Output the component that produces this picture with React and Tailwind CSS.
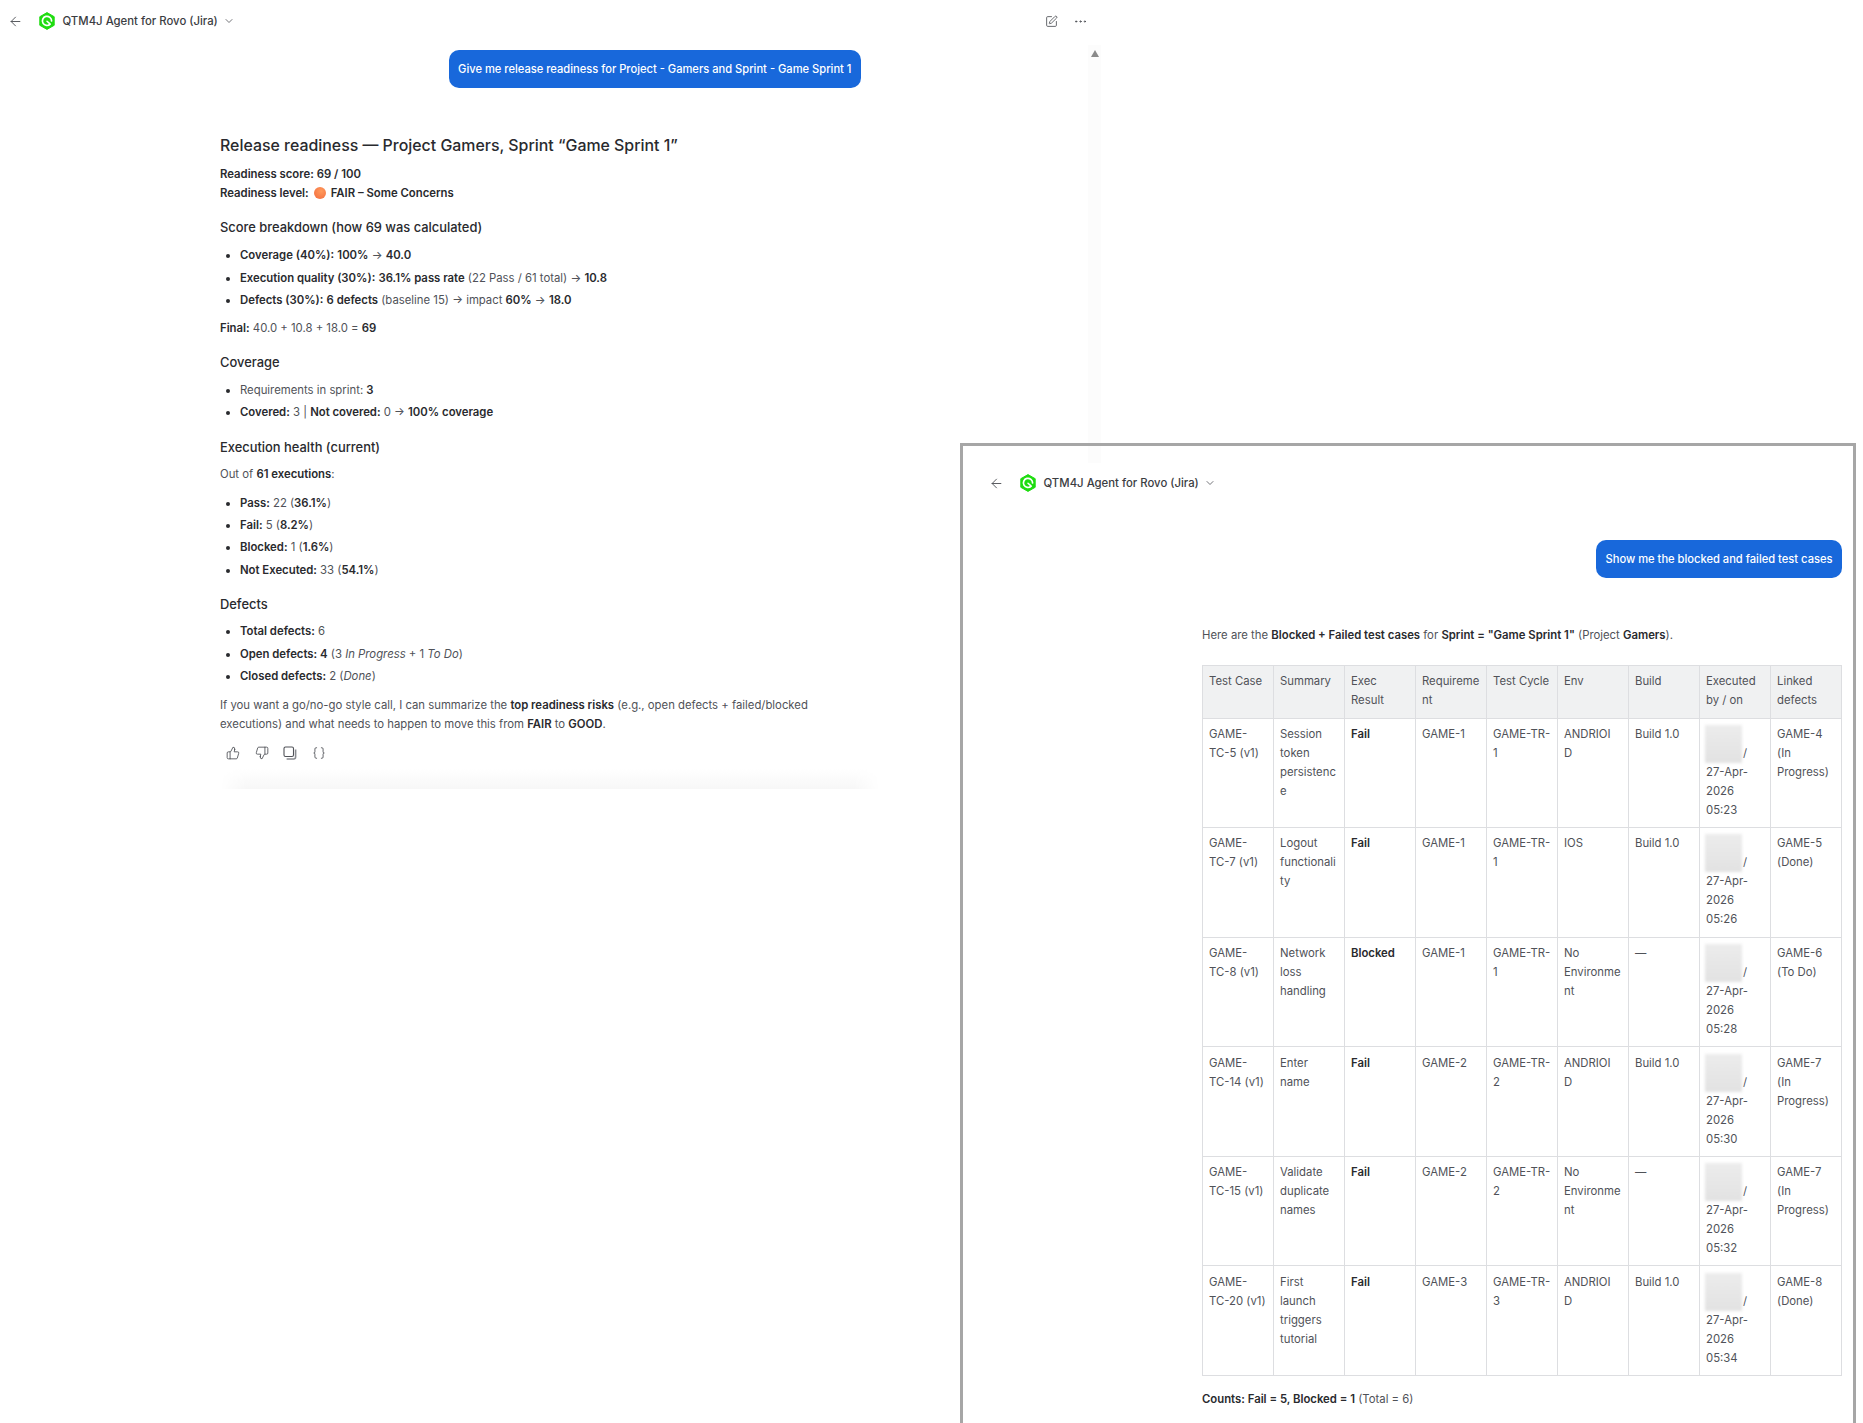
import { ArrowLeft, Braces, ChevronDown, Ellipsis, SquarePen, ThumbsDown, ThumbsUp } from 'lucide-react'

const rows = [
  { id: 'GAME-\nTC-5 (v1)', summary: 'Session token persistence', result: 'Fail', req: 'GAME-1', cycle: 'GAME-TR-1', env: 'ANDRIOI\nD', build: 'Build 1.0', time: '05:23', defects: 'GAME-4 (In Progress)' },
  { id: 'GAME-\nTC-7 (v1)', summary: 'Logout functionality', result: 'Fail', req: 'GAME-1', cycle: 'GAME-TR-1', env: 'IOS', build: 'Build 1.0', time: '05:26', defects: 'GAME-5 (Done)' },
  { id: 'GAME-\nTC-8 (v1)', summary: 'Network loss handling', result: 'Blocked', req: 'GAME-1', cycle: 'GAME-TR-1', env: 'No Environment', build: '—', time: '05:28', defects: 'GAME-6 (To Do)' },
  { id: 'GAME-\nTC-14 (v1)', summary: 'Enter name', result: 'Fail', req: 'GAME-2', cycle: 'GAME-TR-2', env: 'ANDRIOI\nD', build: 'Build 1.0', time: '05:30', defects: 'GAME-7 (In Progress)' },
  { id: 'GAME-\nTC-15 (v1)', summary: 'Validate duplicate names', result: 'Fail', req: 'GAME-2', cycle: 'GAME-TR-2', env: 'No Environment', build: '—', time: '05:32', defects: 'GAME-7 (In Progress)' },
  { id: 'GAME-\nTC-20 (v1)', summary: 'First launch triggers tutorial', result: 'Fail', req: 'GAME-3', cycle: 'GAME-TR-3', env: 'ANDRIOI\nD', build: 'Build 1.0', time: '05:34', defects: 'GAME-8 (Done)' },
]

const headers = ['Test Case', 'Summary', 'Exec Result', 'Requirement', 'Test Cycle', 'Env', 'Build', 'Executed by / on', 'Linked defects']

function Logo() {
  return (
    <svg width="16" height="18" viewBox="0 0 16 18" className="shrink-0">
      <path d="M8 .6 15.2 4.7v8.6L8 17.4.8 13.3V4.7z" fill="#1fdc10" stroke="#1fdc10" strokeWidth="1" strokeLinejoin="round" />
      <path d="M11.2 12.2A4.6 4.6 0 1 1 12.6 9" fill="none" stroke="#fff" strokeWidth="1.7" strokeLinecap="round" />
      <path d="M8 9.2 10.4 11.4" fill="none" stroke="#fff" strokeWidth="1.5" strokeLinecap="round" />
    </svg>
  )
}

function AgentName() {
  return (
    <>
      <Logo />
      <span className="ml-[7.5px] text-[11.35px] leading-[19px] font-medium text-[#3b3d42]">QTM4J Agent for Rovo (Jira)</span>
      <ChevronDown className="ml-[5px] h-[12px] w-[12px] text-[#505258]" strokeWidth={1.6} />
    </>
  )
}

function Bubble({ children }) {
  return (
    <div className="flex justify-end">
      <div className="flex h-[38px] items-center rounded-[10px] bg-[#1868db] px-[9.5px] text-[11.15px] font-medium text-white">
        {children}
      </div>
    </div>
  )
}

function Heading({ children, className }) {
  return <h3 className={`text-[12.9px] leading-[22px] font-medium text-[#292a2e] ${className}`}>{children}</h3>
}

function List({ children, className }) {
  return <ul className={`list-disc space-y-[3.4px] pl-[20px] marker:text-[#292a2e] ${className}`}>{children}</ul>
}

function B({ children }) {
  return <strong className="font-semibold text-[#292a2e]">{children}</strong>
}

function CopyIcon() {
  return (
    <svg width="14" height="14" viewBox="0 0 14 14" fill="none" stroke="#505258" strokeWidth="1.1">
      <rect x="1" y="1" width="9.5" height="9.5" rx="1.5" />
      <path d="M12.6 3.6v7.4a2 2 0 0 1-2 2H3.6" strokeWidth="1.6" stroke="#8a8c91" />
    </svg>
  )
}

function ReleaseReadiness() {
  return (
    <div className="w-[640px] text-[11.33px] leading-[19px] text-[#505258]">
      <h2 className="mt-[45px] text-[15.9px] leading-[26px] font-medium text-[#292a2e]">
        Release readiness — Project Gamers, Sprint “Game Sprint 1”
      </h2>
      <p className="mt-[5.5px]"><B>Readiness score: 69 / 100</B></p>
      <p className="flex items-center">
        <B>Readiness level:</B>
        <span className="mx-[5px] h-[12px] w-[12px] rounded-full bg-[radial-gradient(circle_at_60%_35%,#ff9a5c,#f2693c)]" />
        <B>FAIR – Some Concerns</B>
      </p>

      <Heading className="mt-[14.2px]">Score breakdown (how 69 was calculated)</Heading>
      <List className="mt-[7.5px]">
        <li><B>Coverage (40%):</B> <B>100%</B> → <B>40.0</B></li>
        <li><B>Execution quality (30%):</B> <B>36.1% pass rate</B> (22 Pass / 61 total) → <B>10.8</B></li>
        <li><B>Defects (30%):</B> <B>6 defects</B> (baseline 15) → impact <B>60%</B> → <B>18.0</B></li>
      </List>
      <p className="mt-[9px]"><B>Final:</B> 40.0 + 10.8 + 18.0 = <B>69</B></p>

      <Heading className="mt-[14px]">Coverage</Heading>
      <List className="mt-[7px]">
        <li>Requirements in sprint: <B>3</B></li>
        <li><B>Covered:</B> 3 | <B>Not covered:</B> 0 → <B>100% coverage</B></li>
      </List>

      <Heading className="mt-[14.2px]">Execution health (current)</Heading>
      <p className="mt-[6px]">Out of <B>61 executions</B>:</p>
      <List className="mt-[10px]">
        <li><B>Pass:</B> 22 (<B>36.1%</B>)</li>
        <li><B>Fail:</B> 5 (<B>8.2%</B>)</li>
        <li><B>Blocked:</B> 1 (<B>1.6%</B>)</li>
        <li><B>Not Executed:</B> 33 (<B>54.1%</B>)</li>
      </List>

      <Heading className="mt-[14.6px]">Defects</Heading>
      <List className="mt-[6px]">
        <li><B>Total defects:</B> 6</li>
        <li><B>Open defects: 4</B> (3 <em>In Progress</em> + 1 <em>To Do</em>)</li>
        <li><B>Closed defects:</B> 2 (<em>Done</em>)</li>
      </List>

      <p className="mt-[10px]">
        If you want a go/no-go style call, I can summarize the <B>top readiness risks</B> (e.g., open defects + failed/blocked executions) and what needs to happen to move this from <B>FAIR</B> to <B>GOOD</B>.
      </p>

      <div className="mt-[9px] flex h-[20px] items-center gap-[14.5px] pl-[6px]">
        <ThumbsUp className="h-[14px] w-[14px] text-[#505258]" strokeWidth={1.5} />
        <ThumbsDown className="h-[14px] w-[14px] text-[#505258]" strokeWidth={1.5} />
        <CopyIcon />
        <Braces className="h-[14px] w-[14px] text-[#505258]" strokeWidth={1.5} />
      </div>
    </div>
  )
}

function TestCaseTable() {
  const cell = 'border border-[#dddee1] px-[6px] pt-[6.2px] pb-[7.4px] align-top whitespace-pre-line'
  return (
    <table className="mt-[20px] w-[640px] table-fixed border-collapse text-left [overflow-wrap:break-word]">
      <thead>
        <tr className="bg-[#f0f1f2]">
          {headers.map((h) => (
            <th key={h} className={`${cell} font-normal`}>{h}</th>
          ))}
        </tr>
      </thead>
      <tbody>
        {rows.map((r) => (
          <tr key={r.id}>
            <td className={cell}>{r.id}</td>
            <td className={cell}>{r.summary}</td>
            <td className={cell}><B>{r.result}</B></td>
            <td className={cell}>{r.req}</td>
            <td className={cell}>{r.cycle}</td>
            <td className={cell}>{r.env}</td>
            <td className={cell}>{r.build}</td>
            <td className={cell}>
              <div className="flex h-[38px] items-end">
                <span className="-ml-[1px] h-[38px] w-[37px] bg-gradient-to-b from-[#ececec] to-[#e2e2e2] blur-[1.5px]" />
                <span className="ml-[1px]">/</span>
              </div>
              <div>27-Apr-</div>
              <div>2026</div>
              <div>{r.time}</div>
            </td>
            <td className={cell}>{r.defects}</td>
          </tr>
        ))}
      </tbody>
    </table>
  )
}

export default function App() {
  return (
    <div className="relative h-[1423px] w-[1863px] overflow-hidden bg-white font-['Inter',sans-serif]">
      {/* main chat panel */}
      <div className="w-[1100px]">
        <div className="flex h-[42px] items-center pr-[12px] pl-[8px]">
          <ArrowLeft className="mr-[16px] h-[15px] w-[15px] text-[#505258]" strokeWidth={1.5} />
          <div className="flex items-center">
            <AgentName />
          </div>
          <SquarePen className="mr-[15px] ml-auto h-[13px] w-[13px] text-[#505258]" strokeWidth={1.6} />
          <Ellipsis className="h-[15px] w-[15px] text-[#505258]" strokeWidth={1.6} />
        </div>
        <div className="pt-[8px] pl-[220px]">
          <div className="w-[641px]">
            <Bubble>Give me release readiness for Project - Gamers and Sprint - Game Sprint 1</Bubble>
          </div>
          <ReleaseReadiness />
          <div className="mt-[6px] h-[20px] w-[660px] bg-gradient-to-b from-white to-[#f7f7f7] [mask-image:linear-gradient(to_right,transparent,black_4%,black_96%,transparent)]" />
        </div>
      </div>

      {/* scrollbar */}
      <div className="absolute top-[45px] left-[1088px] h-[418px] w-[13px] bg-[#fcfcfc] pt-[5px] pl-[3px]">
        <div className="h-0 w-0 border-x-[4.5px] border-b-[7px] border-x-transparent border-b-[#8a8a8a]" />
      </div>

      {/* second screenshot window */}
      <div className="absolute top-[443px] left-[960px] h-[1000px] w-[896px] border-[3px] border-[#a6a6a6] text-[11.33px] leading-[19px] text-[#505258]">
        <div className="flex h-[74px] items-center pl-[26px]">
          <ArrowLeft className="mr-[16px] h-[15px] w-[15px] text-[#505258]" strokeWidth={1.5} />
          <div className="flex items-center">
            <AgentName />
          </div>
        </div>
        <div className="pt-[20px] pl-[239px]">
          <div className="w-[640px]">
            <Bubble>Show me the blocked and failed test cases</Bubble>
          </div>
          <p className="mt-[48px]">
            Here are the <B>Blocked + Failed test cases</B> for <B>Sprint = "Game Sprint 1"</B> (Project <B>Gamers</B>).
          </p>
          <TestCaseTable />
          <p className="mt-[13.5px]"><B>Counts: Fail = 5, Blocked = 1</B> (Total = 6)</p>
          <p className="mt-[13.5px] w-[640px]">
            Shown are the results of the latest execution in this sprint, including linked defects in To Do, In Progress and Done states.
          </p>
        </div>
      </div>
    </div>
  )
}
